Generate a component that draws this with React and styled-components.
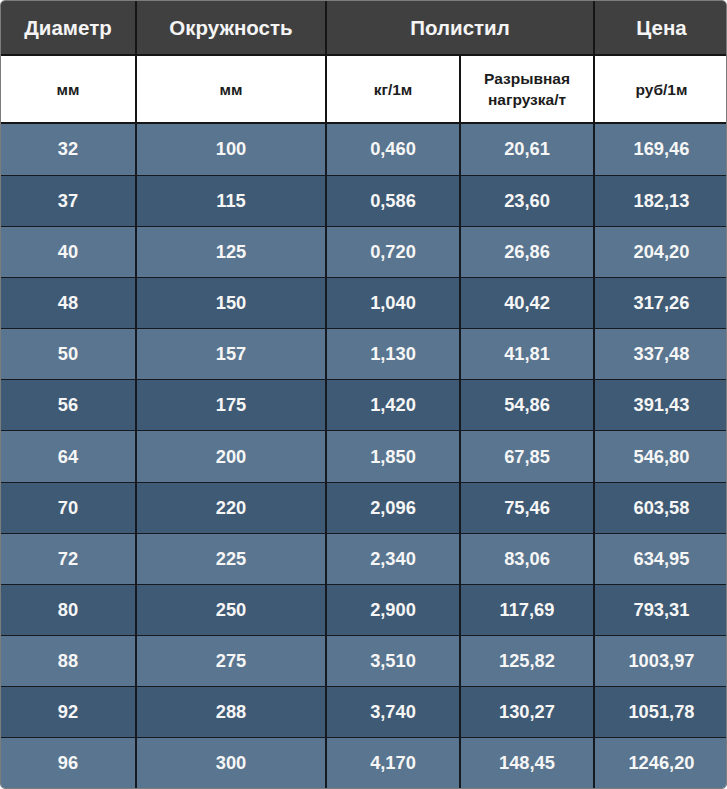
import React from 'react';
import styled, {createGlobalStyle} from 'styled-components';

const GlobalStyle = createGlobalStyle`
  html, body {
    margin: 0;
    padding: 0;
    background: #ffffff;
  }
  body {
    font-family: "Liberation Sans", Arial, sans-serif;
  }
`

const Frame = styled.div`
  width: 727px;
  height: 789px;
  box-sizing: border-box;
  border: 1px solid #7c7c7c;
  border-radius: 5px;
  overflow: hidden;
`

const Table = styled.table`
  width: 100%;
  height: 100%;
  border-collapse: collapse;
  border-style: hidden;
  table-layout: fixed;
`

const HeadCell = styled.th`
  background: #404040;
  color: #f4f4f4;
  font-size: 20.5px;
  font-weight: bold;
  height: 53px;
  padding: 0;
  text-align: center;
  border-right: 2px solid #151515;
  border-bottom: 2px solid #151515;
`

const UnitCell = styled.td`
  background: #ffffff;
  color: #1c1c1c;
  font-size: 15.5px;
  font-weight: bold;
  line-height: 21px;
  height: 66px;
  padding: 0;
  text-align: center;
  border-right: 2px solid #151515;
  border-bottom: 2px solid #151515;
`

const Cell = styled.td`
  background: ${p => (p.$dark ? '#3f5a74' : '#59758f')};
  color: #f6f6f6;
  font-size: 18.3px;
  font-weight: bold;
  padding: 0;
  text-align: center;
  border-right: 2px solid #151a20;
  border-bottom: 1px solid #151a20;
`

const rows = [
  ['32', '100', '0,460', '20,61', '169,46'],
  ['37', '115', '0,586', '23,60', '182,13'],
  ['40', '125', '0,720', '26,86', '204,20'],
  ['48', '150', '1,040', '40,42', '317,26'],
  ['50', '157', '1,130', '41,81', '337,48'],
  ['56', '175', '1,420', '54,86', '391,43'],
  ['64', '200', '1,850', '67,85', '546,80'],
  ['70', '220', '2,096', '75,46', '603,58'],
  ['72', '225', '2,340', '83,06', '634,95'],
  ['80', '250', '2,900', '117,69', '793,31'],
  ['88', '275', '3,510', '125,82', '1003,97'],
  ['92', '288', '3,740', '130,27', '1051,78'],
  ['96', '300', '4,170', '148,45', '1246,20'],
];

const App = () => {
  return (
    <>
      <GlobalStyle/>
      <Frame>
        <Table>
          <colgroup>
            <col style={{width: 135}}/>
            <col style={{width: 190}}/>
            <col style={{width: 134}}/>
            <col style={{width: 134}}/>
            <col style={{width: 134}}/>
          </colgroup>
          <thead>
            <tr>
              <HeadCell>Диаметр</HeadCell>
              <HeadCell>Окружность</HeadCell>
              <HeadCell colSpan={2}>Полистил</HeadCell>
              <HeadCell>Цена</HeadCell>
            </tr>
            <tr>
              <UnitCell>мм</UnitCell>
              <UnitCell>мм</UnitCell>
              <UnitCell>кг/1м</UnitCell>
              <UnitCell>Разрывная<br/>нагрузка/т</UnitCell>
              <UnitCell>руб/1м</UnitCell>
            </tr>
          </thead>
          <tbody>
            {rows.map((r, i) => (
              <tr key={r[0]}>
                {r.map((v, j) => (
                  <Cell key={j} $dark={i % 2 === 1}>{v}</Cell>
                ))}
              </tr>
            ))}
          </tbody>
        </Table>
      </Frame>
    </>
  );
};

export default App;
